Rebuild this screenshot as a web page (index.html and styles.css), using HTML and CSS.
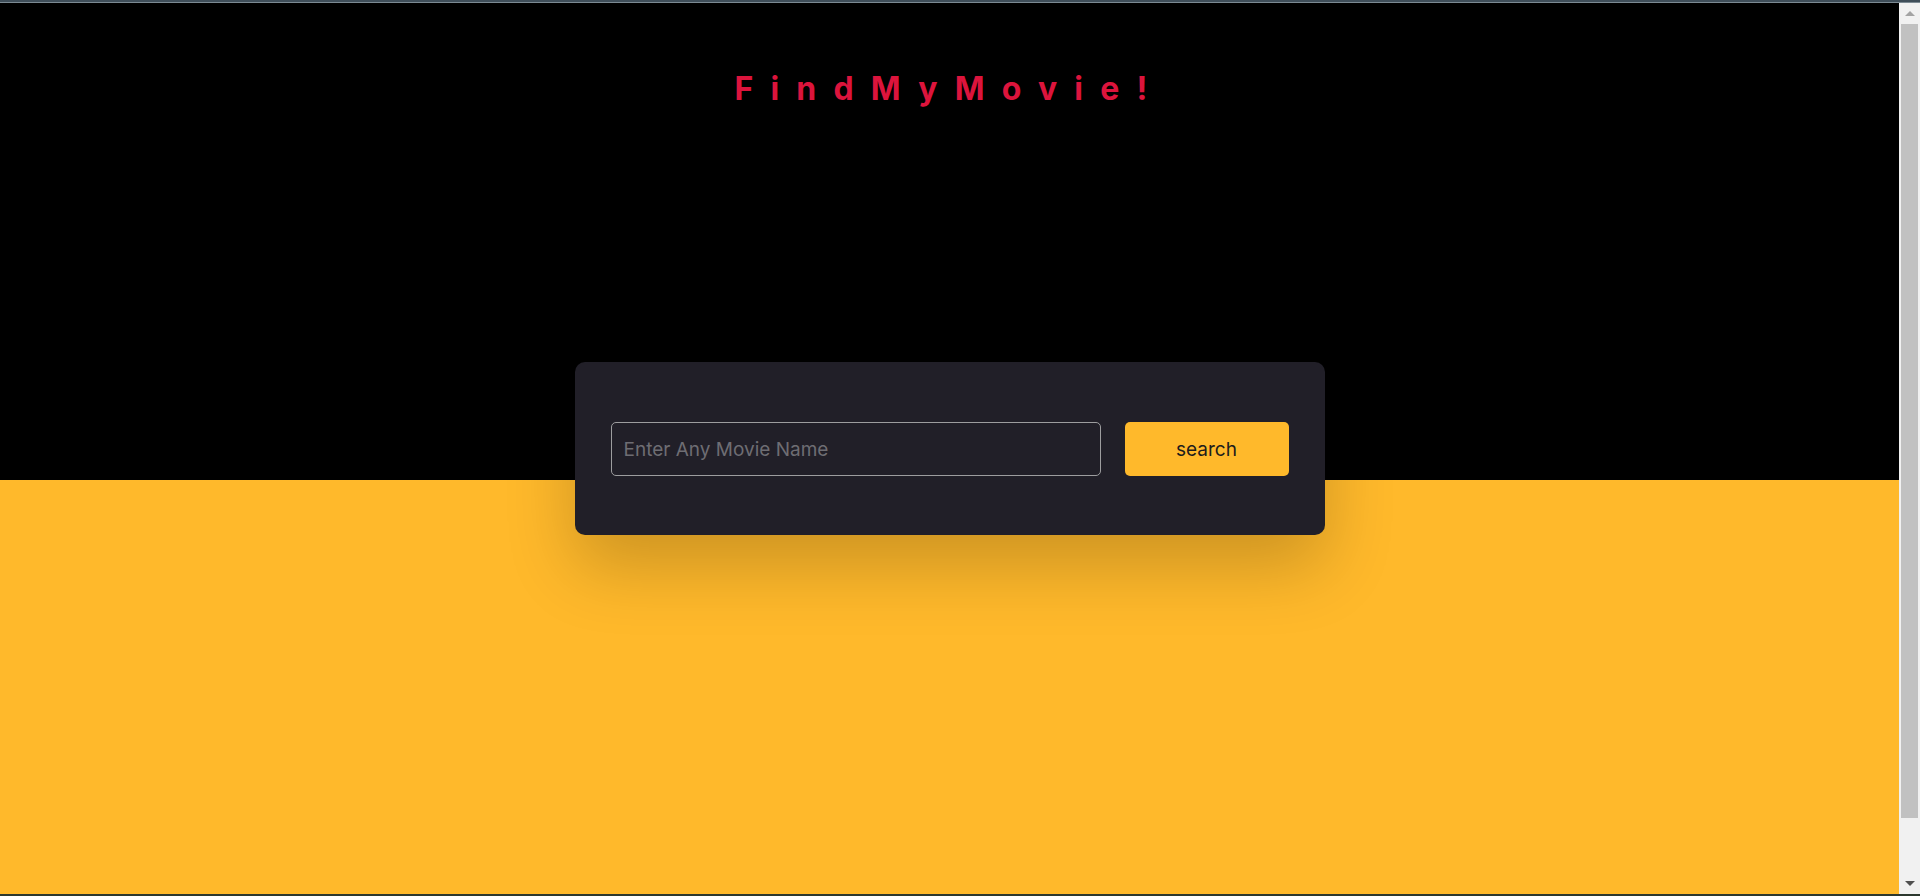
FILE: index.html
```html
<!DOCTYPE html>
<html lang="en">
<head>
<meta charset="utf-8">
<title>FindMyMovie!</title>
<link rel="stylesheet" href="styles.css">
</head>
<body>
  <div class="frame-top"></div>
  <div class="window">
    <main class="page">
      <h1 class="title">FindMyMovie!</h1>
      <form class="search-card" onsubmit="return false">
        <input class="search-input" type="text" placeholder="Enter Any Movie Name">
        <button class="search-btn" type="submit">search</button>
      </form>
    </main>
    <div class="scrollbar">
      <div class="sb-btn"><span class="arrow-up"></span></div>
      <div class="sb-track"><div class="sb-thumb"></div></div>
      <div class="sb-btn"><span class="arrow-down"></span></div>
    </div>
  </div>
  <div class="frame-bottom"></div>
</body>
</html>
```

FILE: styles.css
```css
* { box-sizing: border-box; }

html, body {
  margin: 0;
  height: 896px;
  overflow: hidden;
}

body {
  display: flex;
  flex-direction: column;
  font-family: Inter, "Open Sans", sans-serif;
}

.frame-top {
  height: 3px;
  background: linear-gradient(#3f4e59 0 2px, #7c8a93 2px);
}

.frame-bottom {
  height: 2px;
  background: #2c382f;
}

.window {
  flex: 1;
  display: flex;
  min-height: 0;
}

.page {
  flex: 1;
  background: linear-gradient(to bottom, #000 0 477px, #ffb92b 477px);
}

.title {
  margin: 0;
  padding-top: 70px;
  font-size: 32px;
  line-height: 32px;
  font-weight: 650;
  letter-spacing: 17.2px;
  text-align: center;
  color: #dc143c;
}

.search-card {
  width: 750px;
  margin: 257px auto 0;
  padding: 60px 36px 59px;
  display: flex;
  gap: 24px;
  background: #211f28;
  border-radius: 10px;
  box-shadow: 0 32px 70px rgba(0, 0, 0, 0.2);
}

.search-input {
  flex: 1;
  height: 54px;
  padding: 0 12px;
  background: transparent;
  border: 1px solid #9d9d9f;
  border-radius: 5px;
  font-family: inherit;
  font-size: 19px;
  color: #ddd;
  outline: none;
}

.search-input::placeholder {
  color: #6e6d73;
}

.search-btn {
  width: 164px;
  height: 54px;
  background: #ffb92b;
  border: none;
  border-radius: 5px;
  font-family: inherit;
  font-size: 19px;
  color: #1c1c1c;
}

.scrollbar {
  width: 21px;
  background: #f1f1f1;
  display: flex;
  flex-direction: column;
}

.sb-btn {
  height: 21px;
  display: flex;
  align-items: center;
  justify-content: center;
}

.arrow-up {
  width: 0;
  height: 0;
  border-left: 5px solid transparent;
  border-right: 5px solid transparent;
  border-bottom: 5px solid #a3a3a3;
}

.arrow-down {
  width: 0;
  height: 0;
  border-left: 5px solid transparent;
  border-right: 5px solid transparent;
  border-top: 5px solid #505050;
}

.sb-track {
  flex: 1;
  padding: 0 2px;
}

.sb-thumb {
  height: 794px;
  background: #c1c1c1;
}
```
